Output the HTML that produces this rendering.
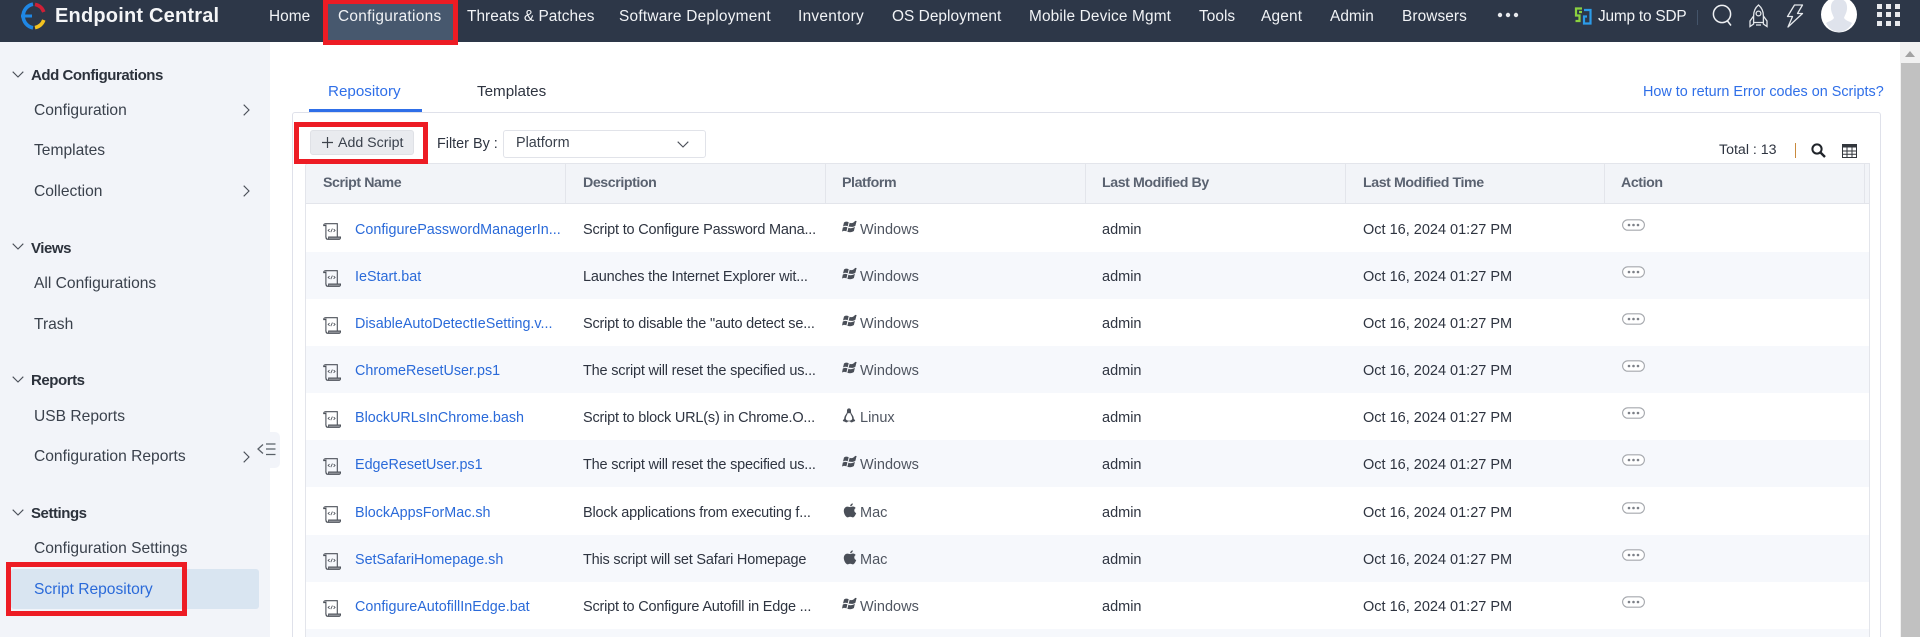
<!DOCTYPE html>
<html lang="en"><head><meta charset="utf-8"><title>Endpoint Central - Script Repository</title>
<style>
html,body{margin:0;padding:0;width:1920px;height:637px;overflow:hidden;background:#fff;font-family:"Liberation Sans",sans-serif;}
#w{position:relative;width:1920px;height:637px;overflow:hidden}
.a{position:absolute}
.t{position:absolute;white-space:nowrap;line-height:20px;font-size:14.5px;color:#2e3440}
.n{color:#f1f3f6;font-size:15.4px;top:7px;letter-spacing:.05px}
.h{font-weight:bold;font-size:15px;color:#2c323c;letter-spacing:-.45px;left:31px}
.s{left:34px;color:#3a414c;font-size:15.6px}
.th{font-weight:bold;font-size:14.2px;color:#5a6270;top:173px;letter-spacing:-.42px}
.l{color:#2a6ad9;font-size:14.35px}
.d{left:583px;letter-spacing:-.2px}
.p{color:#4f5560;left:860px}
.row{position:absolute;left:306px;width:1563px;height:47.2px}
.odd{background:#f6f8fc}
.red{position:absolute;border:5px solid #ed1c24;box-sizing:border-box}
svg{position:absolute;overflow:visible}
.ic{margin-top:1px}
</style></head><body><div id="w">
<svg width="0" height="0" style="position:absolute"><defs>
<symbol id="sc" viewBox="0 0 18 17"><path d="M2.6 .7H14.3V13.5M2.6 .7C1.2 .7 .7 1.6 .7 2.6H2.9M2.9 1.5V14.4" fill="none" stroke="#4d525a" stroke-width="1.1"/><path d="M2.9 14.2C2.9 15.6 3.8 16.4 4.8 16.4H16C17.2 16.4 17.6 15.4 17.6 14H5.6C5.6 15.4 5.2 16.4 4.4 16.4Z" fill="#8b8e94" stroke="#4d525a" stroke-width=".9"/><path d="M6.6 6L5.1 7.4L6.6 8.8M10.6 6L12.1 7.4L10.6 8.8M9.4 5.6L7.8 9.2" fill="none" stroke="#4d525a" stroke-width=".85"/></symbol>
<symbol id="win" viewBox="0 0 15 14"><path d="M2 2.5C3.6 1.4 5 1.5 6.7 2.3L5.7 6.3C4 5.5 2.6 5.5 1 6.5ZM7.7 2.7C9.5 3.5 11 3.5 13.2.9L14.6 1 13.4 5.7C11.6 7 10 7 6.6 6.6ZM.8 7.6C2.4 6.6 3.8 6.6 5.4 7.4L4.4 11.4C2.8 10.6 1.4 10.6 0 11.6ZM6.4 7.8C8 8.6 10 8.6 12.9 6.8L11.9 11C10 12.4 8 12.4 5.4 11.9Z" fill="#4a4f58"/></symbol>
<symbol id="mac" viewBox="0 0 14 15"><path d="M9.8 .4C9.9 1.8 8.7 3.3 7.2 3.2 7.1 1.8 8.4.5 9.8.4ZM7.2 4.1C8 4.1 8.8 3.5 10 3.5 11 3.5 12 4 12.7 5 10.6 6.2 10.9 9.2 13.2 10.1 12.4 12 11.2 14.4 9.7 14.4 8.8 14.4 8.4 13.8 7.2 13.8 6 13.8 5.6 14.4 4.7 14.4 2.9 14.4.8 10.7.8 8 .8 5.2 2.6 3.6 4.4 3.6 5.6 3.6 6.4 4.1 7.2 4.1Z" fill="#4a4f58"/></symbol>
<symbol id="lin" viewBox="0 0 14 15"><path d="M7 .4C5.2.4 4.9 2 5 3.6 5.1 5.3 3.3 6.8 2.6 8.6 2.2 9.6 2.4 10.6 1.9 11.2 1.3 11.8.6 12 .9 12.8 1.2 13.6 2.6 13.6 3.8 14.2 4.8 14.6 5.6 14.2 5.9 13.4H8.1C8.4 14.2 9.2 14.6 10.2 14.2 11.4 13.6 12.8 13.6 13.1 12.8 13.4 12 12.7 11.8 12.1 11.2 11.6 10.6 11.8 9.6 11.4 8.6 10.7 6.8 8.9 5.3 9 3.6 9.1 2 8.8.4 7 .4Z" fill="#4a4f58"/><path d="M5.9 4.9C6.6 5.5 7.4 5.5 8.1 4.9 8.5 6.6 10 8 10.2 10.2 10.4 11.6 9 12.6 7 12.6 5 12.6 3.6 11.6 3.8 10.2 4 8 5.5 6.6 5.9 4.9Z" fill="#fff"/></symbol>
<symbol id="pill" viewBox="0 0 23 12"><rect x=".6" y=".8" width="21.8" height="10.4" rx="5.2" fill="#fff" stroke="#a5a8ad" stroke-width="1.1"/><circle cx="7" cy="6" r="1.3" fill="#7c8087"/><circle cx="11.5" cy="6" r="1.3" fill="#7c8087"/><circle cx="16" cy="6" r="1.3" fill="#7c8087"/></symbol>
<symbol id="cd" viewBox="0 0 12 7"><path d="M.7.7L6 6 11.3.7" fill="none" stroke="#4a4f58" stroke-width="1.1"/></symbol>
<symbol id="cr" viewBox="0 0 7 12"><path d="M.7.7L6 6 .7 11.3" fill="none" stroke="#4a4f58" stroke-width="1.1"/></symbol>
</defs></svg>

<!-- header -->
<div class="a" style="left:0;top:0;width:1920px;height:42px;background:#2d3748"></div>
<svg style="left:18px;top:2px" width="28" height="28" viewBox="0 0 28 28">
<path d="M15 2.2A12 12 0 0 0 15 25.8" fill="none" stroke="#1f87e5" stroke-width="3.6"/>
<path d="M3 14H14" stroke="#1f87e5" stroke-width="3"/>
<path d="M17 2.4A12 12 0 0 1 25.8 10" fill="none" stroke="#cf1f36" stroke-width="3.6"/>
<path d="M25.8 18A12 12 0 0 1 17 25.6" fill="none" stroke="#f3c21f" stroke-width="3.6"/>
<path d="M17.5 9.5L21.5 14 17.5 18.5" fill="none" stroke="#2d3748" stroke-width="1"/>
</svg>
<div class="t" style="left:55px;top:6px;color:#f4f5f7;font-weight:bold;font-size:20px;letter-spacing:.2px;line-height:20px">Endpoint Central</div>
<div class="a" style="left:323px;top:0;width:135px;height:44px;background:#47586e"></div>
<div class="t n" style="left:269px">Home</div>
<div class="t n" style="left:338px;letter-spacing:.3px">Configurations</div>
<div class="t n" style="left:467px">Threats &amp; Patches</div>
<div class="t n" style="left:619px;letter-spacing:.25px">Software Deployment</div>
<div class="t n" style="left:798px;letter-spacing:.3px">Inventory</div>
<div class="t n" style="left:892px">OS Deployment</div>
<div class="t n" style="left:1029px;letter-spacing:.15px">Mobile Device Mgmt</div>
<div class="t n" style="left:1199px">Tools</div>
<div class="t n" style="left:1261px;letter-spacing:.2px">Agent</div>
<div class="t n" style="left:1330px">Admin</div>
<div class="t n" style="left:1402px;letter-spacing:.1px">Browsers</div>
<svg style="left:1497px;top:12px" width="22" height="6"><circle cx="3" cy="3" r="2.2" fill="#e8eaee"/><circle cx="11" cy="3" r="2.2" fill="#e8eaee"/><circle cx="19" cy="3" r="2.2" fill="#e8eaee"/></svg>
<svg style="left:1574px;top:7px" width="18" height="18" viewBox="0 0 18 18"><path d="M8 1.5H2V8.5H5.5V14H1.5M5 5H8" fill="none" stroke="#8bd13f" stroke-width="2.2"/><path d="M10 3H16.5V16.5H10V9.5H13" fill="none" stroke="#2c9be8" stroke-width="2.2"/></svg>
<div class="t" style="left:1598px;top:7px;color:#f1f3f6;font-size:15.4px;letter-spacing:-.2px">Jump to SDP</div>
<div class="a" style="left:1697px;top:10px;width:1px;height:15px;background:#44546a"></div>
<svg style="left:1712px;top:4px" width="22" height="24" viewBox="0 0 22 24"><circle cx="10" cy="10" r="8.6" fill="none" stroke="#eef0f3" stroke-width="1.5"/><path d="M15.5 17L19 21.5" stroke="#eef0f3" stroke-width="1.5"/></svg>
<svg style="left:1749px;top:4px" width="19" height="24" viewBox="0 0 19 24"><path d="M9.5 1C5.8 4 4.6 8 4.6 12V18.5H14.4V12C14.4 8 13.2 4 9.5 1ZM4.6 12L1 17V22.5L4.6 20ZM14.4 12L18 17V22.5L14.4 20ZM7 21H12" fill="none" stroke="#e4e7eb" stroke-width="1.3"/><circle cx="9.5" cy="9.5" r="2.4" fill="none" stroke="#e4e7eb" stroke-width="1.3"/></svg>
<svg style="left:1786px;top:4px" width="18" height="24" viewBox="0 0 18 24"><path d="M8.5 1H16.5L11.5 9.5H16.5L2 23 6.5 12.5H1.5Z" fill="none" stroke="#e4e7eb" stroke-width="1.3" stroke-linejoin="round"/></svg>
<svg style="left:1821px;top:-4px" width="36" height="37" viewBox="0 0 36 37"><circle cx="18" cy="18.5" r="18" fill="#fff"/><path d="M18 3C12 3 9.5 7 10 13 10.4 17 12.5 20 13 22 11 25 7 25.5 5 27 8 33 13 36 18 36 23 36 28 33 31 27 29 25.5 25 25 23 22 23.5 20 25.6 17 26 13 26.5 7 24 3 18 3Z" fill="#dfe3ec"/></svg>
<svg style="left:1877px;top:4px" width="23" height="22"><g fill="#e8eaee"><rect width="5" height="5"/><rect x="9" width="5" height="5"/><rect x="18" width="5" height="5"/><rect y="8" width="5" height="5"/><rect x="9" y="8" width="5" height="5"/><rect x="18" y="8" width="5" height="5"/><rect y="17" width="5" height="5"/><rect x="9" y="17" width="5" height="5"/><rect x="18" y="17" width="5" height="5"/></g></svg>

<!-- sidebar -->
<div class="a" style="left:0;top:42px;width:270px;height:595px;background:#f2f4f9"></div>
<div class="a" style="left:256px;top:432px;width:24px;height:36px;background:#f2f4f9;border-radius:0 5px 5px 0"></div>
<svg style="left:257px;top:443px" width="19" height="14" viewBox="0 0 19 14"><path d="M6 1.5L1 6 6 10.5" fill="none" stroke="#5a6068" stroke-width="1.3"/><path d="M9 1H18.5M9 6H18.5M9 11.5H18.5" stroke="#5a6068" stroke-width="1.3"/></svg>
<div class="a" style="left:11px;top:569px;width:248px;height:40px;background:#d9e5f1;border-radius:3px"></div>

<svg style="left:12px;top:71px" width="12" height="7"><use href="#cd"/></svg>
<svg style="left:12px;top:243px" width="12" height="7"><use href="#cd"/></svg>
<svg style="left:12px;top:376px" width="12" height="7"><use href="#cd"/></svg>
<svg style="left:12px;top:509px" width="12" height="7"><use href="#cd"/></svg>
<svg style="left:243px;top:104px" width="7" height="12"><use href="#cr"/></svg>
<svg style="left:243px;top:185px" width="7" height="12"><use href="#cr"/></svg>
<svg style="left:243px;top:451px" width="7" height="12"><use href="#cr"/></svg>

<div class="t h" style="top:66px">Add Configurations</div>
<div class="t s" style="top:101px">Configuration</div>
<div class="t s" style="top:141px">Templates</div>
<div class="t s" style="top:182px">Collection</div>
<div class="t h" style="top:239px">Views</div>
<div class="t s" style="top:274px">All Configurations</div>
<div class="t s" style="top:315px">Trash</div>
<div class="t h" style="top:371px">Reports</div>
<div class="t s" style="top:407px">USB Reports</div>
<div class="t s" style="top:447px">Configuration Reports</div>
<div class="t h" style="top:504px">Settings</div>
<div class="t s" style="top:539px">Configuration Settings</div>
<div class="t s" style="top:580px;color:#2a6ad9">Script Repository</div>

<!-- tabs -->
<div class="t" style="left:328px;top:82px;color:#2f6fe8;font-size:15.2px">Repository</div>
<div class="t" style="left:477px;top:82px;color:#2e3440;font-size:15.2px">Templates</div>
<div class="t" style="left:1643px;top:82px;font-size:14.4px;color:#2f6fe8">How to return Error codes on Scripts?</div>

<!-- card -->
<div class="a" style="left:292px;top:112px;width:1589px;height:540px;border:1px solid #dfe1ea;border-radius:3px;box-sizing:border-box"></div>
<div class="a" style="left:309px;top:109px;width:113px;height:3px;background:#2f6fe8"></div>

<div class="a" style="left:310px;top:130px;width:104px;height:25px;background:#e9ebef;border:1px solid #dfe1e6;border-radius:3px;box-sizing:border-box"></div>
<svg style="left:322px;top:137px" width="11" height="11"><path d="M5.5 0V11M0 5.5H11" stroke="#3d434c" stroke-width="1.2"/></svg>
<div class="t" style="left:338px;top:133px;font-size:14.2px;color:#3a414c">Add Script</div>
<div class="t" style="left:437px;top:134px;font-size:14.4px">Filter By :</div>
<div class="a" style="left:503px;top:130px;width:203px;height:28px;background:#fff;border:1px solid #e1e3e9;border-radius:3px;box-sizing:border-box"></div>
<div class="t" style="left:516px;top:133px;font-size:14.4px;color:#3a414c">Platform</div>
<svg style="left:677px;top:141px" width="12" height="7"><use href="#cd"/></svg>
<div class="t" style="left:1719px;top:140px;font-size:14.2px">Total : 13</div>
<div class="a" style="left:1795px;top:143px;width:1px;height:15px;background:#c98a3d"></div>
<svg style="left:1811px;top:143px" width="15" height="15" viewBox="0 0 15 15"><circle cx="6" cy="6" r="4.6" fill="none" stroke="#20242a" stroke-width="2"/><path d="M9.5 9.5L14 14" stroke="#20242a" stroke-width="2.4"/></svg>
<svg style="left:1842px;top:144px" width="15" height="14" viewBox="0 0 15 14"><path d="M.5.5H14.5V13.5H.5Z" fill="#fff" stroke="#33373d"/><path d="M0 0H15V3.5H0Z" fill="#33373d"/><path d="M0 7H15M0 10.2H15M5 3V14M10 3V14" stroke="#33373d"/></svg>

<!-- table head -->
<div class="a" style="left:305px;top:163px;width:1560px;height:40.5px;background:#f2f4f8;border:1px solid #e3e5eb;border-right:none;box-sizing:border-box;border-radius:3px 0 0 0"></div>
<div class="a" style="left:1864px;top:163px;width:5px;height:41px;background:#f2f4f8;border-top:1px solid #e3e5eb;border-bottom:1px solid #e3e5eb;box-sizing:border-box"></div>
<div class="a" style="left:565px;top:163px;width:1px;height:40px;background:#e3e5eb"></div>
<div class="a" style="left:825px;top:163px;width:1px;height:40px;background:#e3e5eb"></div>
<div class="a" style="left:1085px;top:163px;width:1px;height:40px;background:#e3e5eb"></div>
<div class="a" style="left:1345px;top:163px;width:1px;height:40px;background:#e3e5eb"></div>
<div class="a" style="left:1604px;top:163px;width:1px;height:40px;background:#e3e5eb"></div>
<div class="a" style="left:1864px;top:163px;width:1px;height:40px;background:#e3e5eb"></div>
<div class="t th" style="left:323px">Script Name</div>
<div class="t th" style="left:583px">Description</div>
<div class="t th" style="left:842px">Platform</div>
<div class="t th" style="left:1102px">Last Modified By</div>
<div class="t th" style="left:1363px">Last Modified Time</div>
<div class="t th" style="left:1621px">Action</div>

<div class="a" style="left:305px;top:203px;width:1px;height:434px;background:#e3e5eb"></div>
<div class="a" style="left:1869px;top:163px;width:1px;height:474px;background:#e3e5eb"></div>

<!-- rows -->
<div class="row" style="top:204.3px"></div>
<div class="row odd" style="top:251.5px"></div>
<div class="row" style="top:298.7px"></div>
<div class="row odd" style="top:345.9px"></div>
<div class="row" style="top:393.1px"></div>
<div class="row odd" style="top:440.3px"></div>
<div class="row" style="top:487.5px"></div>
<div class="row odd" style="top:534.7px"></div>
<div class="row" style="top:581.9px"></div>
<div class="row odd" style="top:629.1px;height:8px"></div>

<div class="a" style="left:0;top:1px;width:1920px;height:636px">
<!-- r1 -->
<svg class="ic" style="left:323px;top:221px" width="18" height="17"><use href="#sc"/></svg>
<div class="t l" style="left:355px;top:219px">ConfigurePasswordManagerIn...</div>
<div class="t d" style="top:219px">Script to Configure Password Mana...</div>
<svg style="left:842px;top:219px" width="15" height="14"><use href="#win"/></svg>
<div class="t p" style="top:219px">Windows</div>
<div class="t" style="left:1102px;top:219px">admin</div>
<div class="t" style="left:1363px;top:219px">Oct 16, 2024 01:27 PM</div>
<!-- r2 -->
<svg class="ic" style="left:323px;top:268px" width="18" height="17"><use href="#sc"/></svg>
<div class="t l" style="left:355px;top:266px">IeStart.bat</div>
<div class="t d" style="top:266px">Launches the Internet Explorer wit...</div>
<svg style="left:842px;top:266px" width="15" height="14"><use href="#win"/></svg>
<div class="t p" style="top:266px">Windows</div>
<div class="t" style="left:1102px;top:266px">admin</div>
<div class="t" style="left:1363px;top:266px">Oct 16, 2024 01:27 PM</div>
<!-- r3 -->
<svg class="ic" style="left:323px;top:315px" width="18" height="17"><use href="#sc"/></svg>
<div class="t l" style="left:355px;top:313px">DisableAutoDetectIeSetting.v...</div>
<div class="t d" style="top:313px">Script to disable the "auto detect se...</div>
<svg style="left:842px;top:313px" width="15" height="14"><use href="#win"/></svg>
<div class="t p" style="top:313px">Windows</div>
<div class="t" style="left:1102px;top:313px">admin</div>
<div class="t" style="left:1363px;top:313px">Oct 16, 2024 01:27 PM</div>
<!-- r4 -->
<svg class="ic" style="left:323px;top:362px" width="18" height="17"><use href="#sc"/></svg>
<div class="t l" style="left:355px;top:360px">ChromeResetUser.ps1</div>
<div class="t d" style="top:360px">The script will reset the specified us...</div>
<svg style="left:842px;top:360px" width="15" height="14"><use href="#win"/></svg>
<div class="t p" style="top:360px">Windows</div>
<div class="t" style="left:1102px;top:360px">admin</div>
<div class="t" style="left:1363px;top:360px">Oct 16, 2024 01:27 PM</div>
<!-- r5 -->
<svg class="ic" style="left:323px;top:409px" width="18" height="17"><use href="#sc"/></svg>
<div class="t l" style="left:355px;top:407px">BlockURLsInChrome.bash</div>
<div class="t d" style="top:407px">Script to block URL(s) in Chrome.O...</div>
<svg style="left:842px;top:407px" width="14" height="15"><use href="#lin"/></svg>
<div class="t p" style="top:407px">Linux</div>
<div class="t" style="left:1102px;top:407px">admin</div>
<div class="t" style="left:1363px;top:407px">Oct 16, 2024 01:27 PM</div>
<!-- r6 -->
<svg class="ic" style="left:323px;top:456px" width="18" height="17"><use href="#sc"/></svg>
<div class="t l" style="left:355px;top:454px">EdgeResetUser.ps1</div>
<div class="t d" style="top:454px">The script will reset the specified us...</div>
<svg style="left:842px;top:454px" width="15" height="14"><use href="#win"/></svg>
<div class="t p" style="top:454px">Windows</div>
<div class="t" style="left:1102px;top:454px">admin</div>
<div class="t" style="left:1363px;top:454px">Oct 16, 2024 01:27 PM</div>
<!-- r7 -->
<svg class="ic" style="left:323px;top:504px" width="18" height="17"><use href="#sc"/></svg>
<div class="t l" style="left:355px;top:502px">BlockAppsForMac.sh</div>
<div class="t d" style="top:502px">Block applications from executing f...</div>
<svg style="left:843px;top:502px" width="14" height="15"><use href="#mac"/></svg>
<div class="t p" style="top:502px">Mac</div>
<div class="t" style="left:1102px;top:502px">admin</div>
<div class="t" style="left:1363px;top:502px">Oct 16, 2024 01:27 PM</div>
<!-- r8 -->
<svg class="ic" style="left:323px;top:551px" width="18" height="17"><use href="#sc"/></svg>
<div class="t l" style="left:355px;top:549px">SetSafariHomepage.sh</div>
<div class="t d" style="top:549px">This script will set Safari Homepage</div>
<svg style="left:843px;top:549px" width="14" height="15"><use href="#mac"/></svg>
<div class="t p" style="top:549px">Mac</div>
<div class="t" style="left:1102px;top:549px">admin</div>
<div class="t" style="left:1363px;top:549px">Oct 16, 2024 01:27 PM</div>
<!-- r9 -->
<svg class="ic" style="left:323px;top:598px" width="18" height="17"><use href="#sc"/></svg>
<div class="t l" style="left:355px;top:596px">ConfigureAutofillInEdge.bat</div>
<div class="t d" style="top:596px">Script to Configure Autofill in Edge ...</div>
<svg style="left:842px;top:596px" width="15" height="14"><use href="#win"/></svg>
<div class="t p" style="top:596px">Windows</div>
<div class="t" style="left:1102px;top:596px">admin</div>
<div class="t" style="left:1363px;top:596px">Oct 16, 2024 01:27 PM</div>
</div>

<svg style="left:1622px;top:219px" width="23" height="12"><use href="#pill"/></svg>
<svg style="left:1622px;top:266px" width="23" height="12"><use href="#pill"/></svg>
<svg style="left:1622px;top:313px" width="23" height="12"><use href="#pill"/></svg>
<svg style="left:1622px;top:360px" width="23" height="12"><use href="#pill"/></svg>
<svg style="left:1622px;top:407px" width="23" height="12"><use href="#pill"/></svg>
<svg style="left:1622px;top:454px" width="23" height="12"><use href="#pill"/></svg>
<svg style="left:1622px;top:502px" width="23" height="12"><use href="#pill"/></svg>
<svg style="left:1622px;top:549px" width="23" height="12"><use href="#pill"/></svg>
<svg style="left:1622px;top:596px" width="23" height="12"><use href="#pill"/></svg>

<!-- scrollbar -->
<div class="a" style="left:1900px;top:42px;width:20px;height:595px;background:#f1f1f1"></div>
<div class="a" style="left:1901px;top:63px;width:19px;height:574px;background:#c1c1c1"></div>
<svg style="left:1905px;top:51px" width="10" height="6"><path d="M5 0L10 6H0Z" fill="#a3a3a3"/></svg>

<!-- red annotation boxes -->
<div class="red" style="left:323px;top:-1px;width:135px;height:46px"></div>
<div class="red" style="left:294px;top:122px;width:134px;height:42px"></div>
<div class="red" style="left:6px;top:562px;width:181px;height:54px"></div>
</div></body></html>
